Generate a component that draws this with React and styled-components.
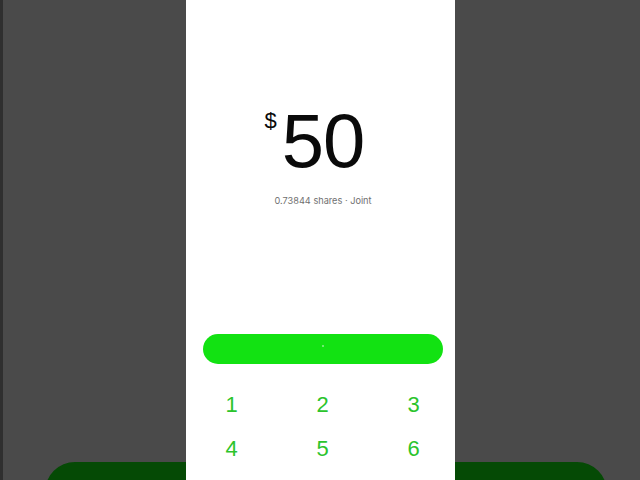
import React from 'react'
import styled, { createGlobalStyle } from 'styled-components';

const Global = createGlobalStyle`
    html, body {
        margin: 0;
        padding: 0;
        background: #4a4a4a;
    }
`;

const Backdrop = styled.div`
    position: relative;
    width: 640px;
    height: 480px;
    overflow: hidden;
    box-sizing: border-box;
    background: #4a4a4a;
    border-left: 3px solid #2f2f2f;
    display: flex;
    align-items: flex-end;
    padding: 0 33px 0 42px;
`;

const GhostButton = styled.div`
    flex: 1;
    height: 60px;
    margin-bottom: -42px;
    border-radius: 30px;
    background: #054a05;
`;

const Sheet = styled.div`
    position: absolute;
    top: 0;
    left: 183px;
    width: 269px;
    height: 480px;
    background: #ffffff;
    display: flex;
    flex-direction: column;
    align-items: center;
    padding: 103px 0 0 5px;
    box-sizing: border-box;
    overflow: hidden;

    & > * {
        flex-shrink: 0;
    }
`;

const Amount = styled.div`
    position: relative;
    font-family: "Liberation Sans", Arial, sans-serif;
    font-size: 76px;
    line-height: 1;
    color: #0a0a0a;
    letter-spacing: -1px;
`;

const Currency = styled.span`
    position: absolute;
    right: 100%;
    top: 7px;
    margin-right: 5px;
    font-size: 22px;
    line-height: 1;
    letter-spacing: 0;
`;

const Meta = styled.p`
    margin: 15px 0 0;
    font-family: Inter, "Noto Sans", sans-serif;
    font-size: 9.2px;
    line-height: 14px;
    color: #707070;
`;

const Confirm = styled.button`
    margin-top: 126px;
    width: 240px;
    height: 30px;
    border: none;
    border-radius: 15px;
    background: #12e212;
    display: flex;
    align-items: center;
    justify-content: center;
    padding: 0;
    cursor: pointer;
`;

const Dot = styled.span`
    width: 2px;
    height: 2px;
    margin-bottom: 7px;
    border-radius: 50%;
    background: #8ff08f;
`;

const Keypad = styled.div`
    align-self: flex-start;
    margin: 19px 0 0 -5px;
    display: grid;
    grid-template-columns: repeat(3, 91px);
    grid-auto-rows: 44px;
`;

const Key = styled.button`
    border: none;
    background: none;
    padding: 0;
    font-family: "Liberation Sans", Arial, sans-serif;
    font-size: 22px;
    color: #2cc42c;
    display: flex;
    align-items: center;
    justify-content: center;
    cursor: pointer;
`;

const keys = ['1', '2', '3', '4', '5', '6'];

function App() {
    return (
        <>
            <Global />
            <Backdrop>
                <GhostButton />
                <Sheet>
                    <Amount>
                        <Currency>$</Currency>
                        50
                    </Amount>
                    <Meta>0.73844 shares · Joint</Meta>
                    <Confirm aria-label="Buy">
                        <Dot />
                    </Confirm>
                    <Keypad>
                        {keys.map(k => (
                            <Key key={k}>{k}</Key>
                        ))}
                    </Keypad>
                </Sheet>
            </Backdrop>
        </>
    )
}

export default App
